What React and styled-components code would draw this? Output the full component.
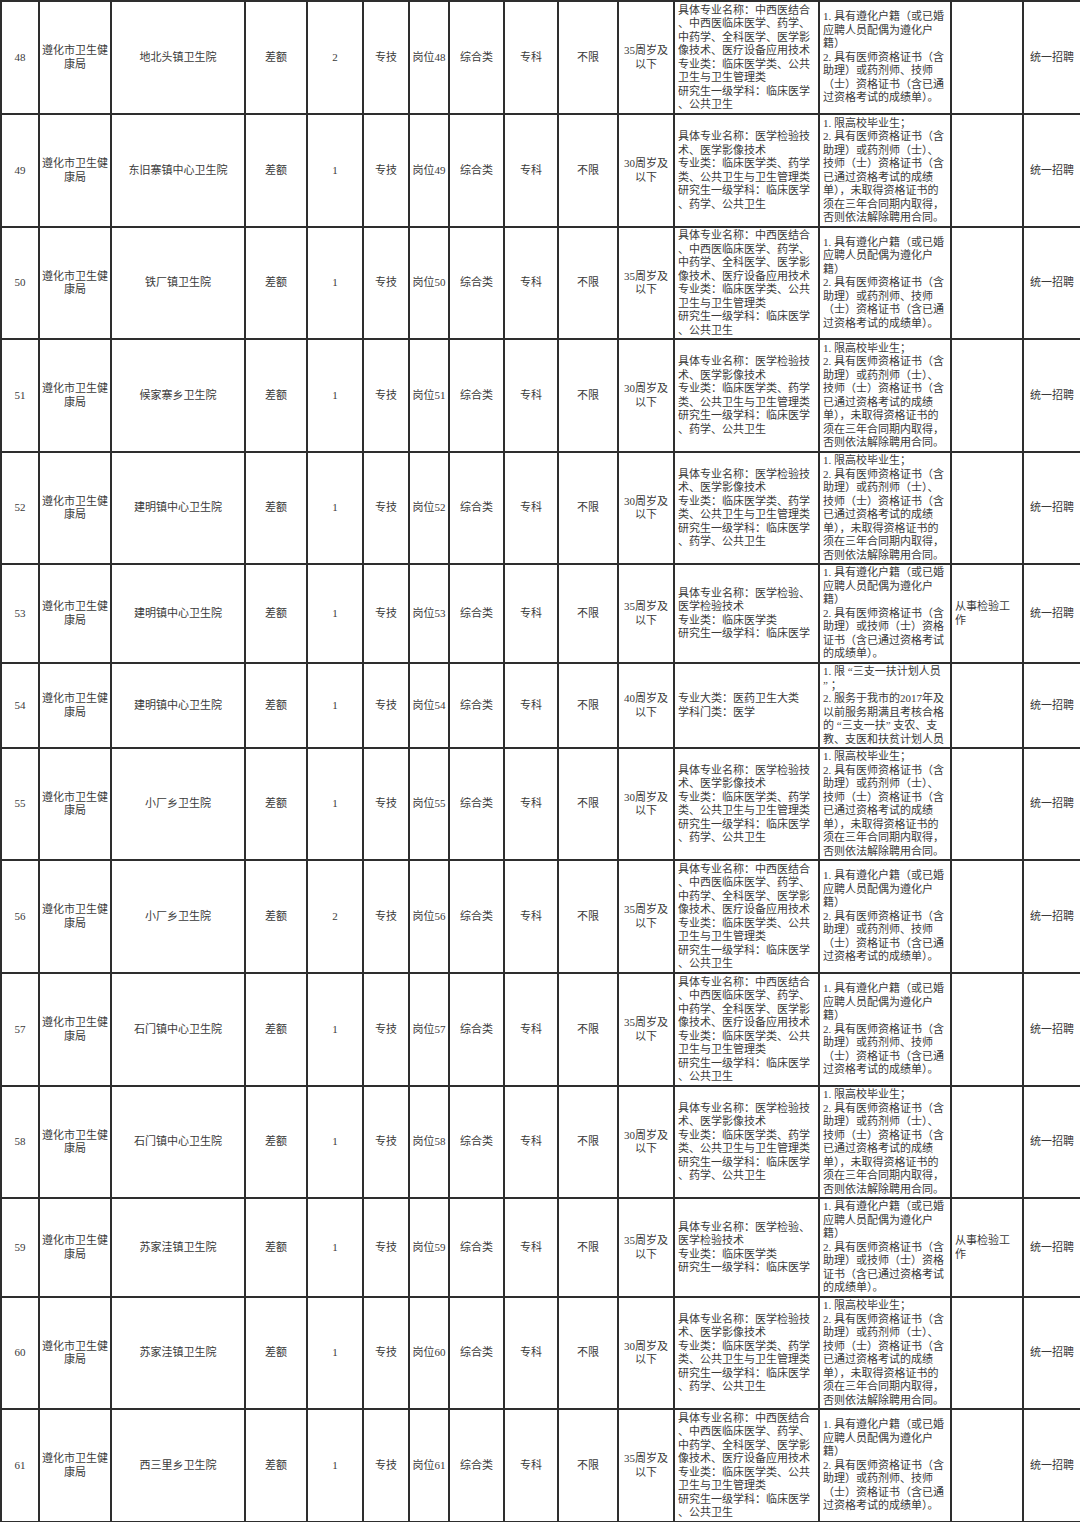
import React from "react";
import styled, { createGlobalStyle } from "styled-components";

const GlobalStyle = createGlobalStyle`
  html, body {
    margin: 0;
    padding: 0;
    background: #ffffff;
  }
  body {
    font-family: "Liberation Serif", "Noto Sans CJK SC", serif;
    color: #3a3a3a;
  }
`;

const COLS = [38, 72, 134, 62, 56, 46, 40, 55, 54, 60, 56, 145, 132, 72, 58];

const Sheet = styled.table`
  width: 1080px;
  table-layout: fixed;
  border-collapse: collapse;
  border-top: 1px solid #777;
  font-size: 11px;
  line-height: 13.5px;
`;

const Row = styled.tr`
  height: ${(p) => p.$h}px;
`;

const Cell = styled.td`
  border: 2px solid #2e2e2e;
  padding: 0 ${(p) => (p.$left ? "3px" : "1px")};
  text-align: ${(p) => (p.$left ? "left" : "center")};
  vertical-align: middle;
  overflow: hidden;
`;

const Lines = styled.div`
  max-height: ${(p) => p.$max}px;
  overflow: hidden;
`;

const Line = styled.span`
  display: block;
  white-space: nowrap;
`;

const SPEC = {
  A: [
    "具体专业名称：中西医结合",
    "、中西医临床医学、药学、",
    "中药学、全科医学、医学影",
    "像技术、医疗设备应用技术",
    "专业类：临床医学类、公共",
    "卫生与卫生管理类",
    "研究生一级学科：临床医学",
    "、公共卫生",
  ],
  B: [
    "具体专业名称：医学检验技",
    "术、医学影像技术",
    "专业类：临床医学类、药学",
    "类、公共卫生与卫生管理类",
    "研究生一级学科：临床医学",
    "、药学、公共卫生",
  ],
  C: [
    "具体专业名称：医学检验、",
    "医学检验技术",
    "专业类：临床医学类",
    "研究生一级学科：临床医学",
  ],
  D: ["专业大类：医药卫生大类", "学科门类：医学"],
};

const COND = {
  A: [
    "1. 具有遵化户籍（或已婚",
    "应聘人员配偶为遵化户",
    "籍）",
    "2. 具有医师资格证书（含",
    "助理）或药剂师、技师",
    "（士）资格证书（含已通",
    "过资格考试的成绩单）。",
  ],
  B: [
    "1. 限高校毕业生；",
    "2. 具有医师资格证书（含",
    "助理）或药剂师（士）、",
    "技师（士）资格证书（含",
    "已通过资格考试的成绩",
    "单），未取得资格证书的",
    "须在三年合同期内取得，",
    "否则依法解除聘用合同。",
  ],
  C: [
    "1. 具有遵化户籍（或已婚",
    "应聘人员配偶为遵化户",
    "籍）",
    "2. 具有医师资格证书（含",
    "助理）或技师（士）资格",
    "证书（含已通过资格考试",
    "的成绩单）。",
  ],
  D: [
    "1. 限 “三支一扶计划人员",
    "” ；",
    "2. 服务于我市的2017年及",
    "以前服务期满且考核合格",
    "的 “三支一扶” 支农、支",
    "教、支医和扶贫计划人员",
  ],
};

const AGE = { A: "35", B: "30", C: "35", D: "40" };

const rows = [
  { no: 48, unit: "地北头镇卫生院", n: 2, t: "A", h: 113 },
  { no: 49, unit: "东旧寨镇中心卫生院", n: 1, t: "B", h: 113 },
  { no: 50, unit: "铁厂镇卫生院", n: 1, t: "A", h: 112 },
  { no: 51, unit: "候家寨乡卫生院", n: 1, t: "B", h: 113 },
  { no: 52, unit: "建明镇中心卫生院", n: 1, t: "B", h: 112 },
  { no: 53, unit: "建明镇中心卫生院", n: 1, t: "C", h: 99 },
  { no: 54, unit: "建明镇中心卫生院", n: 1, t: "D", h: 85 },
  { no: 55, unit: "小厂乡卫生院", n: 1, t: "B", h: 112 },
  { no: 56, unit: "小厂乡卫生院", n: 2, t: "A", h: 113 },
  { no: 57, unit: "石门镇中心卫生院", n: 1, t: "A", h: 113 },
  { no: 58, unit: "石门镇中心卫生院", n: 1, t: "B", h: 112 },
  { no: 59, unit: "苏家洼镇卫生院", n: 1, t: "C", h: 99 },
  { no: 60, unit: "苏家洼镇卫生院", n: 1, t: "B", h: 112 },
  { no: 61, unit: "西三里乡卫生院", n: 1, t: "A", h: 113 },
];

const Multi = ({ lines, max }) => (
  <Lines $max={max}>
    {lines.map((l, i) => (
      <Line key={i}>{l}</Line>
    ))}
  </Lines>
);

const JobRow = ({ r }) => {
  const max = r.h - 2;
  return (
    <Row $h={r.h}>
      <Cell>{r.no}</Cell>
      <Cell>
        <Multi lines={["遵化市卫生健", "康局"]} max={max} />
      </Cell>
      <Cell>{r.unit}</Cell>
      <Cell>差额</Cell>
      <Cell>{r.n}</Cell>
      <Cell>专技</Cell>
      <Cell>岗位{r.no}</Cell>
      <Cell>综合类</Cell>
      <Cell>专科</Cell>
      <Cell>不限</Cell>
      <Cell>
        <Multi lines={[`${AGE[r.t]}周岁及`, "以下"]} max={max} />
      </Cell>
      <Cell $left>
        <Multi lines={SPEC[r.t]} max={max} />
      </Cell>
      <Cell $left>
        <Multi lines={COND[r.t]} max={max} />
      </Cell>
      <Cell $left>
        {r.t === "C" ? <Multi lines={["从事检验工", "作"]} max={max} /> : null}
      </Cell>
      <Cell>统一招聘</Cell>
    </Row>
  );
};

const App = () => (
  <>
    <GlobalStyle />
    <Sheet>
      <colgroup>
        {COLS.map((w, i) => (
          <col key={i} style={{ width: w }} />
        ))}
      </colgroup>
      <tbody>
        {rows.map((r) => (
          <JobRow key={r.no} r={r} />
        ))}
      </tbody>
    </Sheet>
  </>
);

export default App;
